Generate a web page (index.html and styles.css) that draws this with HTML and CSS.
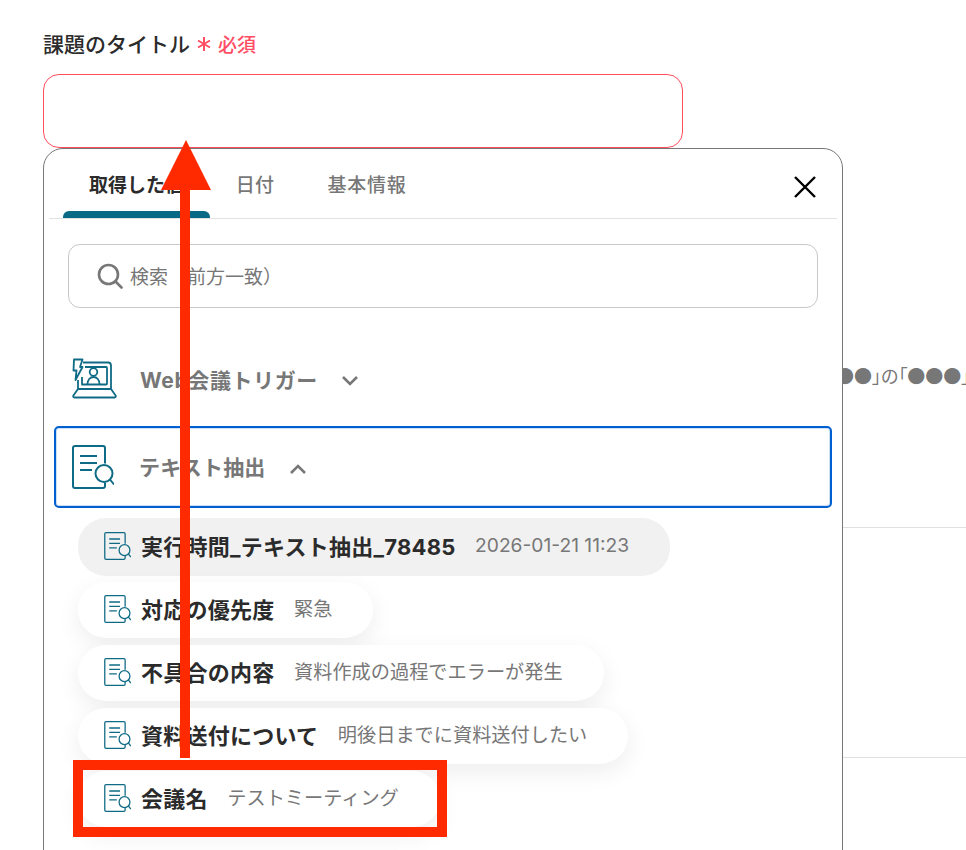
FILE: index.html
```html
<!DOCTYPE html>
<html lang="ja">
<head>
<meta charset="utf-8">
<title>課題のタイトル</title>
<link rel="stylesheet" href="styles.css">
</head>
<body>
<svg width="0" height="0" class="defs">
  <symbol id="doc" viewBox="0 0 42 44">
    <path d="M33 18.500V3a2 2 0 0 0-2-2H3a2 2 0 0 0-2 2v38a2 2 0 0 0 2 2h28a2 2 0 0 0 2-2v-3.500" fill="none" stroke="currentColor" stroke-width="2"/>
    <path d="M8 11h17M8 18h17M8 25h12" fill="none" stroke="currentColor" stroke-width="2"/>
    <circle cx="32" cy="28.500" r="8.500" fill="none" stroke="currentColor" stroke-width="2"/>
    <path d="M38 34.500l4 5" fill="none" stroke="currentColor" stroke-width="2"/>
  </symbol>
</svg>
<main class="page">
  <div class="field-label">
    <span>課題のタイトル</span>
    <span class="req">
      <svg class="star" viewBox="0 0 14 14" width="14" height="14"><path d="M7 0v14M1 3.500l12 7M13 3.500l-12 7" fill="none" stroke="#ff4d63" stroke-width="2"/></svg>
      <span>必須</span>
    </span>
  </div>
  <div class="title-input"></div>

  <div class="behind">
    <div class="behind-text">●●●」の「●●●」</div>
    <hr class="behind-rule first">
    <hr class="behind-rule second">
  </div>

  <section class="picker">
    <div class="tabs">
      <div class="tab active">取得した値</div>
      <div class="tab">日付</div>
      <div class="tab">基本情報</div>
      <svg class="close" viewBox="0 0 24 24" width="24" height="24"><path d="M2 2l20 20M22 2L2 22" fill="none" stroke="#000" stroke-width="2.400"/></svg>
    </div>
    <div class="search">
      <svg class="search-icon" viewBox="0 0 26 26" width="26" height="26"><circle cx="11.500" cy="11.500" r="9.500" fill="none" stroke="#777" stroke-width="2.600"/><path d="M18.500 18.500l6 6" fill="none" stroke="#777" stroke-width="2.600" stroke-linecap="round"/></svg>
      <span>検索（前方一致）</span>
    </div>
    <div class="group web">
      <svg class="group-icon" viewBox="0 0 46 42" width="46" height="42" fill="none" stroke="#0f6b85" stroke-width="1.800" stroke-linejoin="round">
        <path d="M11 4.500H36a3 3 0 0 1 3 3V31H6V22"/>
        <path d="M13 9H34a1 1 0 0 1 1 1V25.500a1 1 0 0 1-1 1H10V19"/>
        <path d="M2 1.500H10.500L8 9H10.500L3.500 22L4.500 12.500H1.500Z"/>
        <circle cx="21.500" cy="14" r="3.800"/>
        <path d="M15.500 26c0-4 2.500-7 6-7s6 3 6 7"/>
        <path d="M6 31L1.400 37.500a1.300 1.300 0 0 0 1 2H42.600a1.300 1.300 0 0 0 1-2L39 31"/>
      </svg>
      <span class="group-name">Web会議トリガー</span>
      <svg class="chev" viewBox="0 0 18 12" width="18" height="12"><path d="M2 2l7 7 7-7" fill="none" stroke="#777" stroke-width="2.600"/></svg>
    </div>
    <div class="group open">
      <svg class="doc-large"><use href="#doc"/></svg>
      <span class="group-name">テキスト抽出</span>
      <svg class="chev" viewBox="0 0 18 12" width="18" height="12"><path d="M2 10l7-7 7 7" fill="none" stroke="#777" stroke-width="2.600"/></svg>
    </div>
    <div class="pills">
      <div class="pill hover"><svg class="pill-icon"><use href="#doc"/></svg><b>実行時間_テキスト抽出_78485</b><span>2026-01-21 11:23</span></div>
      <div class="pill"><svg class="pill-icon"><use href="#doc"/></svg><b>対応の優先度</b><span>緊急</span></div>
      <div class="pill"><svg class="pill-icon"><use href="#doc"/></svg><b>不具合の内容</b><span>資料作成の過程でエラーが発生</span></div>
      <div class="pill"><svg class="pill-icon"><use href="#doc"/></svg><b>資料送付について</b><span>明後日までに資料送付したい</span></div>
      <div class="pill"><svg class="pill-icon"><use href="#doc"/></svg><b>会議名</b><span>テストミーティング</span></div>
    </div>
  </section>

  <div class="anno-box"></div>
  <div class="anno-stem"></div>
  <div class="anno-head"></div>
</main>
</body>
</html>
```
FILE: styles.css
```css
* { box-sizing: border-box; }
html, body { margin: 0; height: 100%; overflow: hidden; background: #fff; }
body { font-family: "Inter", "Noto Sans CJK JP", sans-serif; color: #2b2b2b; }
.defs { position: absolute; }
.page { position: relative; width: 966px; height: 850px; overflow: hidden; padding: 28px 0 0 43px; }

.field-label { display: flex; align-items: center; gap: 7px; height: 30px; font-size: 21px; font-weight: 500; }
.req { display: flex; align-items: center; gap: 7px; color: #ff4d63; font-size: 19px; font-weight: 500; }
.star { display: block; margin-top: 2px; }
.title-input { margin-top: 16px; width: 640px; height: 74px; border: 1px solid #ff4d5e; border-radius: 16px; background: #fff; }

.behind { position: absolute; inset: 0; }
.behind-text { position: absolute; left: 818px; top: 362px; font-family: "Noto Sans CJK JP", sans-serif; font-feature-settings: "palt"; font-size: 18px; line-height: 26px; color: #777; white-space: nowrap; }
.behind-rule { position: absolute; left: 843px; right: 0; margin: 0; border: 0; border-top: 1px solid #e0e0e0; }
.behind-rule.first { top: 527px; }
.behind-rule.second { top: 757px; }

.picker { position: absolute; left: 43px; top: 148px; width: 800px; height: 760px; background: #fff; border: 1px solid #777; border-radius: 20px; padding: 0 5px; }

.tabs { position: relative; display: flex; height: 70px; border-bottom: 1px solid #e2e2e2; }
.tab { width: 147px; padding-top: 24px; text-align: center; font-size: 19px; letter-spacing: .3px; font-weight: 500; color: #777; line-height: 26px; }
.tab:nth-child(2) { width: 80px; margin-left: 5px; }
.tab:nth-child(3) { width: 100px; margin-left: 22px; letter-spacing: .8px; }
.tab.active { margin-left: 14px; color: #2b2b2b; font-weight: 700; position: relative; letter-spacing: 0; }
.tab.active::after { content: ""; position: absolute; left: 0; right: 0; bottom: 0; height: 7px; background: #0a6a85; border-radius: 6px 6px 0 0; }
.close { position: absolute; left: 744px; top: 26px; }

.search { display: flex; align-items: center; gap: 7px; margin: 25px 19px 0 19px; height: 64px; border: 1px solid #c8c8c8; border-radius: 12px; padding-left: 28px; font-size: 19px; color: #777; }
.search span { padding-bottom: 2px; }

.group { display: flex; align-items: center; font-weight: 700; font-size: 21px; color: #777; }
.group.web { margin: 35px 0 0 0; height: 72px; padding-left: 23px; }
.group.open { margin: 11px 5px 0 5px; height: 82px; border: 2px solid #0060d0; border-radius: 5px; padding-left: 16px; box-shadow: inset 0 0 0 1px rgba(0,96,208,.2); }
.group-icon { flex: none; }
.doc-large { width: 42px; height: 44px; color: #0f6b85; flex: none; }
.group-name { margin-left: 22px; letter-spacing: .6px; padding-bottom: 1px; }
.group.open .group-name { margin-left: 25px; letter-spacing: .2px; padding-bottom: 3px; }
.chev { margin-left: 23px; margin-top: 3px; }

.pills { display: flex; flex-direction: column; gap: 7px; margin: 10px 0 0 29px; align-items: flex-start; }
.pill { display: flex; align-items: center; height: 56px; padding: 0 41px 0 26px; border-radius: 28px; background: #fff; box-shadow: 0 8px 24px rgba(0,0,0,.07); white-space: nowrap; }
.pill.hover { background: #f1f1f1; box-shadow: none; height: 58px; margin-bottom: -1px; }
.pill-icon { width: 27px; height: 28px; color: #0f6b85; flex: none; margin-right: 10px; margin-bottom: 2px; }
.pill b { font-size: 22px; font-weight: 700; color: #2b2b2b; letter-spacing: .25px; padding-bottom: 5px; }
.pill span { margin-left: 19.500px; font-size: 19.200px; color: #777; padding-bottom: 4px; }

.anno-box { position: absolute; left: 73px; top: 760px; width: 374px; height: 77px; border: 10px solid #ff2a00; }
.anno-stem { position: absolute; left: 180px; top: 185px; width: 10px; height: 573px; background: #ff2a00; }
.anno-head { position: absolute; left: 161px; top: 140px; width: 50px; height: 50px; background: #ff2a00; clip-path: polygon(50% 0, 100% 100%, 0 100%); }
```
